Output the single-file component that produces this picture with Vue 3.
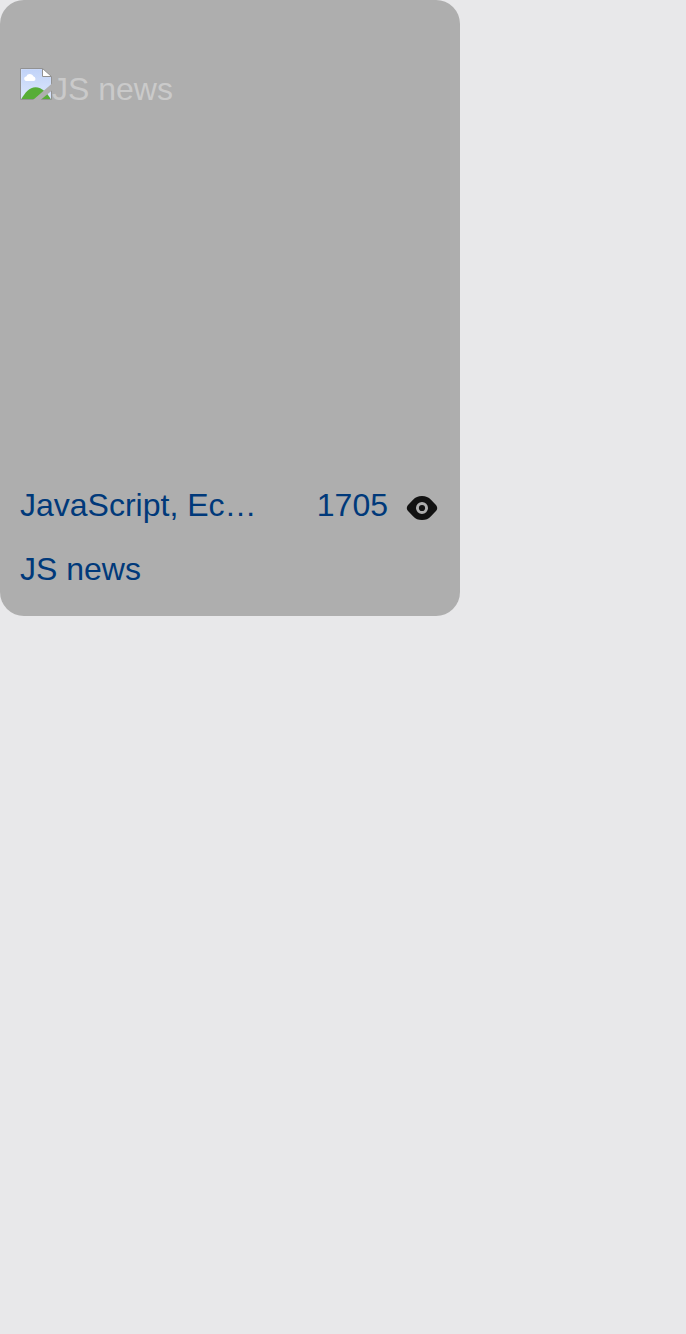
<script setup>
const article = { title: 'JS news', tags: 'JavaScript, Ec…', views: 1705 }
</script>

<template>
  <main class="page">
    <article class="card">
      <div class="cover">
        <svg class="broken" viewBox="0 0 32 32" aria-hidden="true">
          <defs>
            <linearGradient id="sky" x1="0" y1="0" x2="0" y2="1">
              <stop offset="0" stop-color="#c1d3f8" />
              <stop offset="1" stop-color="#dce7fc" />
            </linearGradient>
          </defs>
          <path d="M.5 .5H22.5L31.5 9.5V31.5H.5Z" fill="#d4e0f9" />
          <path d="M1.6 1.6H22V9H30.5V31H1.6Z" fill="url(#sky)" />
          <path d="M5.8 13a2.3 2.3 0 0 1 .4-4.5A4 4 0 0 1 13.6 8.6a2.3 2.3 0 0 1 .4 4.4Z" fill="#fff" />
          <path d="M1 31.5C5 24.5 9.5 19.2 15.5 19.2C22 19.2 27.5 25 31 31.5Z" fill="#57ad37" />
          <path d="M22.5 .5V8.5H31.5Z" fill="#fff" />
          <path d="M22.5 .5V8.5H31.5L22.5 .5H.5V31.5H31.5V9" fill="none" stroke="#929292" />
          <path d="M13 32L32 15.5V22.5L20.5 32Z" fill="#aeaeae" />
        </svg>
        <span>{{ article.title }}</span>
      </div>
      <div class="meta">
        <span class="tags">{{ article.tags }}</span>
        <span class="views">{{ article.views }}</span>
        <svg class="eye" viewBox="0 0 32 24" aria-hidden="true">
          <path fill-rule="evenodd" d="M1.8 9.2L6.8 4C9.8 1 12 0 16 0S22.2 1 25.2 4L30.2 9.2Q32.2 12 30.2 14.8L25.2 20C22.2 23 20 24 16 24S9.8 23 6.8 20L1.8 14.8Q-.2 12 1.8 9.2ZM16 6a6 6 0 1 0 0 12 6 6 0 0 0 0-12Z" fill="#121212" />
          <circle cx="16" cy="12" r="3.1" fill="#121212" />
        </svg>
      </div>
      <div class="title">{{ article.title }}</div>
    </article>
  </main>
</template>

<style>
body { background: #e8e8ea; }
</style>

<style scoped>
.page { min-height: 1334px; background: #e8e8ea; }
.card {
  box-sizing: border-box;
  width: 460px;
  height: 616px;
  padding: 68px 20px 0;
  border-radius: 24px;
  background: #aeaeae;
  color: #00397a;
  font: 32px/40px "Liberation Sans", Arial, sans-serif;
}
.cover { display: flex; height: 399px; color: #cacaca; }
.cover span { line-height: 42px; }
.broken { width: 32px; height: 32px; }
.meta { display: flex; align-items: center; height: 76px; }
.tags { width: 240px; white-space: nowrap; }
.views { width: 128px; text-align: right; }
.eye { width: 32px; height: 24px; margin: 5px 0 0 18px; }
.title { line-height: 52px; }
</style>
